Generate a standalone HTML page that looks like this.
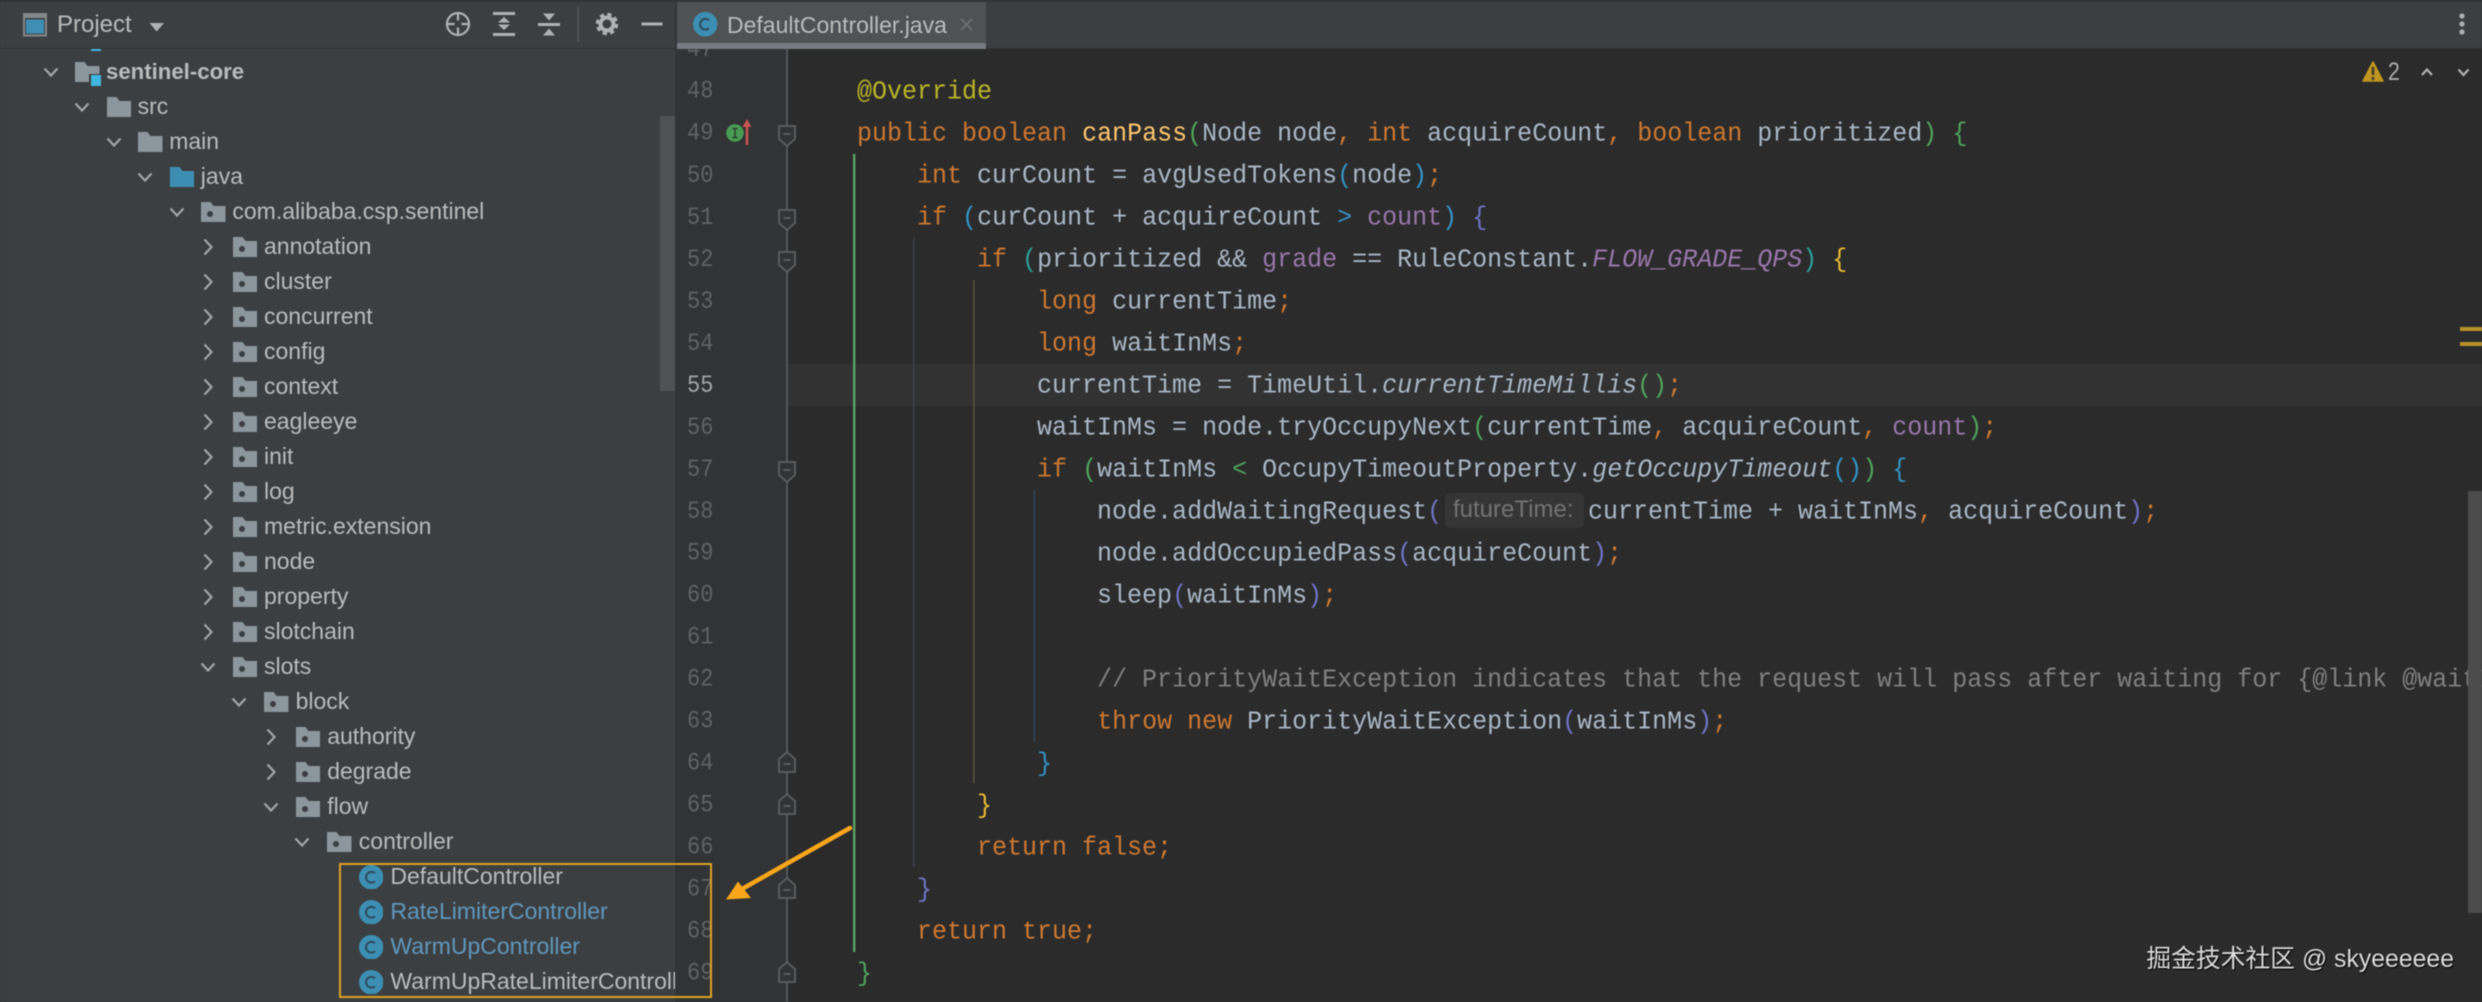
<!DOCTYPE html>
<html><head><meta charset="utf-8"><style>
html,body{margin:0;padding:0;background:#2b2b2b}
body{position:relative;width:2482px;height:1002px;overflow:hidden;background:#2b2b2b;font-family:"Liberation Sans","Noto Sans CJK SC",sans-serif;filter:blur(.4px)}
.abs,.l,.n,.row{position:absolute}
#tree{position:absolute;left:0;top:0;width:675px;height:1002px;background:#3c3f41;overflow:hidden}
.row{left:0;width:675px;height:35px;top:calc(54.2px + var(--i)*35px);color:#bbb;font-size:23px;line-height:35px}
.row svg{position:absolute}
.row .ic{left:calc(75px + var(--l)*31.5px);top:7.7px;width:24.5px;height:20px}
.row .ch{left:calc(41px + var(--l)*31.4px);top:7.5px;width:20px;height:20px;fill:none;stroke:#a3a5a7;stroke-width:2.2}
.row span{position:absolute;white-space:pre;left:calc(106px + var(--l)*31.6px);top:0}
.row .m{color:#6097bd}
#gutter{position:absolute;left:675px;top:0;width:112px;height:1002px;background:#313335}
#cur{position:absolute;left:787px;top:364px;width:1695px;height:42px;background:#323232}
#fold{position:absolute;left:786px;top:49px;width:2px;height:953px;background:#545658}
.n{left:687px;top:calc(70.7px + (var(--n) - 48)*42.03px);height:42px;line-height:42px;font:22px/42px "Liberation Mono",monospace;color:#606366;transform:scaleY(1.15)}
.l{left:797px;top:calc(70.7px + (var(--n) - 48)*42.03px);height:42px;font:25px/42px "Liberation Mono",monospace;color:#a9b7c6;white-space:pre;transform:scaleY(1.05)}
i{font-style:normal}
.k,.o{color:#cc7832}.f{color:#ffc66d}.v{color:#9876aa}.it{font-style:italic}.c{color:#808080}.a{color:#bbb529}
.g{color:#4fa35c}.b{color:#3592c4}.y{color:#e8ba36}.t{color:#2aa198}.p{color:#6f73c4}
#head{position:absolute;left:0;top:0;width:2482px;height:49px;background:#3c3f41;border-bottom:0}
</style></head><body>

<div id="tree">
<svg width="0" height="0" style="position:absolute"><defs>
<symbol id="fd" viewBox="0 0 24.5 20"><path d="M0 0H9.5L12.5 4H24.5V20H0Z" fill="#8b969d"/></symbol>
<symbol id="pk" viewBox="0 0 24.5 20"><path d="M0 0H9.5L12.5 4H24.5V20H0Z" fill="#8b969d"/><circle cx="9" cy="12" r="3" fill="#3c3f41"/></symbol>
<symbol id="jv" viewBox="0 0 24.5 20"><path d="M0 0H9.5L12.5 4H24.5V20H0Z" fill="#3c8fb3"/></symbol>
<symbol id="cl" viewBox="0 0 24.5 24.5"><circle cx="12.25" cy="12.25" r="12.25" fill="#3c8fb3"/><path d="M16 8.2A5.4 5.4 0 1 0 16 16.3" fill="none" stroke="#2f4a5a" stroke-width="2"/></symbol>
<symbol id="d" viewBox="0 0 20 20"><path d="M3.5 6.5L10 13.5L16.5 6.5"/></symbol>
<symbol id="r" viewBox="0 0 20 20"><path d="M6.5 2.5L13.5 10L6.5 17.5"/></symbol>
</defs></svg>
<div class="abs" style="left:91px;top:49px;width:10px;height:2px;background:#40b6e0"></div>

<div class="row" style="--i:0;--l:0"><svg class="ch"><use href="#d"/></svg><svg class="ic"><use href="#fd"/></svg><div class="abs" style="left:89px;top:20px;width:13px;height:13px;background:#3c3f41"></div><div class="abs" style="left:91px;top:21px;width:10px;height:11px;background:#40b6e0"></div><span style="font-weight:bold;font-size:22.2px">sentinel-core</span></div>
<div class="row" style="--i:1;--l:1"><svg class="ch"><use href="#d"/></svg><svg class="ic"><use href="#fd"/></svg><span>src</span></div>
<div class="row" style="--i:2;--l:2"><svg class="ch"><use href="#d"/></svg><svg class="ic"><use href="#fd"/></svg><span>main</span></div>
<div class="row" style="--i:3;--l:3"><svg class="ch"><use href="#d"/></svg><svg class="ic"><use href="#jv"/></svg><span>java</span></div>
<div class="row" style="--i:4;--l:4"><svg class="ch"><use href="#d"/></svg><svg class="ic"><use href="#pk"/></svg><span>com.alibaba.csp.sentinel</span></div>
<div class="row" style="--i:5;--l:5"><svg class="ch"><use href="#r"/></svg><svg class="ic"><use href="#pk"/></svg><span>annotation</span></div>
<div class="row" style="--i:6;--l:5"><svg class="ch"><use href="#r"/></svg><svg class="ic"><use href="#pk"/></svg><span>cluster</span></div>
<div class="row" style="--i:7;--l:5"><svg class="ch"><use href="#r"/></svg><svg class="ic"><use href="#pk"/></svg><span>concurrent</span></div>
<div class="row" style="--i:8;--l:5"><svg class="ch"><use href="#r"/></svg><svg class="ic"><use href="#pk"/></svg><span>config</span></div>
<div class="row" style="--i:9;--l:5"><svg class="ch"><use href="#r"/></svg><svg class="ic"><use href="#pk"/></svg><span>context</span></div>
<div class="row" style="--i:10;--l:5"><svg class="ch"><use href="#r"/></svg><svg class="ic"><use href="#pk"/></svg><span>eagleeye</span></div>
<div class="row" style="--i:11;--l:5"><svg class="ch"><use href="#r"/></svg><svg class="ic"><use href="#pk"/></svg><span>init</span></div>
<div class="row" style="--i:12;--l:5"><svg class="ch"><use href="#r"/></svg><svg class="ic"><use href="#pk"/></svg><span>log</span></div>
<div class="row" style="--i:13;--l:5"><svg class="ch"><use href="#r"/></svg><svg class="ic"><use href="#pk"/></svg><span>metric.extension</span></div>
<div class="row" style="--i:14;--l:5"><svg class="ch"><use href="#r"/></svg><svg class="ic"><use href="#pk"/></svg><span>node</span></div>
<div class="row" style="--i:15;--l:5"><svg class="ch"><use href="#r"/></svg><svg class="ic"><use href="#pk"/></svg><span>property</span></div>
<div class="row" style="--i:16;--l:5"><svg class="ch"><use href="#r"/></svg><svg class="ic"><use href="#pk"/></svg><span>slotchain</span></div>
<div class="row" style="--i:17;--l:5"><svg class="ch"><use href="#d"/></svg><svg class="ic"><use href="#pk"/></svg><span>slots</span></div>
<div class="row" style="--i:18;--l:6"><svg class="ch"><use href="#d"/></svg><svg class="ic"><use href="#pk"/></svg><span>block</span></div>
<div class="row" style="--i:19;--l:7"><svg class="ch"><use href="#r"/></svg><svg class="ic"><use href="#pk"/></svg><span>authority</span></div>
<div class="row" style="--i:20;--l:7"><svg class="ch"><use href="#r"/></svg><svg class="ic"><use href="#pk"/></svg><span>degrade</span></div>
<div class="row" style="--i:21;--l:7"><svg class="ch"><use href="#d"/></svg><svg class="ic"><use href="#pk"/></svg><span>flow</span></div>
<div class="row" style="--i:22;--l:8"><svg class="ch"><use href="#d"/></svg><svg class="ic"><use href="#pk"/></svg><span>controller</span></div>
<div class="row" style="--i:23;--l:9"><svg class="ic" style="top:5.5px;height:24.5px"><use href="#cl"/></svg><span>DefaultController</span></div>
<div class="row" style="--i:24;--l:9"><svg class="ic" style="top:5.5px;height:24.5px"><use href="#cl"/></svg><span class="m">RateLimiterController</span></div>
<div class="row" style="--i:25;--l:9"><svg class="ic" style="top:5.5px;height:24.5px"><use href="#cl"/></svg><span class="m">WarmUpController</span></div>
<div class="row" style="--i:26;--l:9"><svg class="ic" style="top:5.5px;height:24.5px"><use href="#cl"/></svg><span>WarmUpRateLimiterController</span></div>
<div class="abs" style="left:660px;top:116px;width:15px;height:275px;background:#4f5254"></div>
</div>

<div id="gutter"></div>
<div id="cur"></div>
<div id="fold"></div>

<div class="n" style="--n:47">47</div>
<div class="n" style="--n:48">48</div>
<div class="n" style="--n:49">49</div>
<div class="n" style="--n:50">50</div>
<div class="n" style="--n:51">51</div>
<div class="n" style="--n:52">52</div>
<div class="n" style="--n:53">53</div>
<div class="n" style="--n:54">54</div>
<div class="n" style="--n:55;color:#a4a3a3">55</div>
<div class="n" style="--n:56">56</div>
<div class="n" style="--n:57">57</div>
<div class="n" style="--n:58">58</div>
<div class="n" style="--n:59">59</div>
<div class="n" style="--n:60">60</div>
<div class="n" style="--n:61">61</div>
<div class="n" style="--n:62">62</div>
<div class="n" style="--n:63">63</div>
<div class="n" style="--n:64">64</div>
<div class="n" style="--n:65">65</div>
<div class="n" style="--n:66">66</div>
<div class="n" style="--n:67">67</div>
<div class="n" style="--n:68">68</div>
<div class="n" style="--n:69">69</div>

<svg class="abs" style="left:0;top:0" width="2482" height="1002">
<defs>
<symbol id="fdn" viewBox="0 0 18 22"><path d="M1 1H17V14L9 21L1 14Z" fill="#313335" stroke="#5d6062" stroke-width="1.8"/><path d="M5.5 9H12.5" stroke="#5d6062" stroke-width="1.8"/></symbol>
<symbol id="fup" viewBox="0 0 18 22"><path d="M1 21H17V8L9 1L1 8Z" fill="#313335" stroke="#5d6062" stroke-width="1.8"/><path d="M5.5 13H12.5" stroke="#5d6062" stroke-width="1.8"/></symbol>
</defs>
<use href="#fdn" x="778" y="125" width="18" height="22"/>
<use href="#fdn" x="778" y="209" width="18" height="22"/>
<use href="#fdn" x="778" y="251" width="18" height="22"/>
<use href="#fdn" x="778" y="461" width="18" height="22"/>
<use href="#fup" x="778" y="751" width="18" height="22"/>
<use href="#fup" x="778" y="793" width="18" height="22"/>
<use href="#fup" x="778" y="877" width="18" height="22"/>
<use href="#fup" x="778" y="961" width="18" height="22"/>
<circle cx="735" cy="133" r="8.8" fill="#499c54"/><path d="M732.5 128.5H737.5M735 128.5V137.5M732.5 137.5H737.5" stroke="#2b3a2b" stroke-width="1.4" fill="none"/>
<path d="M747 145V124" stroke="#c75450" stroke-width="2.6"/><path d="M747 119L742.5 127H751.5Z" fill="#c75450"/>
<rect x="853" y="154" width="2.4" height="798" fill="#5aa265"/>
<rect x="913" y="238" width="1.6" height="629" fill="#3d3f4e"/>
<rect x="973" y="280" width="1.6" height="503" fill="#54503a"/>
<rect x="1033.5" y="490" width="1.6" height="252" fill="#2f4358"/>
<rect x="1445" y="493" width="139" height="35" rx="5" fill="#353535"/>
</svg>

<div class="l" style="--n:48"><i class="a">    @Override</i></div>
<div class="l" style="--n:49">    <i class="k">public boolean </i><i class="f">canPass</i><i class="g">(</i>Node node<i class="o">, </i><i class="k">int </i>acquireCount<i class="o">, </i><i class="k">boolean </i>prioritized<i class="g">)</i> <i class="g">{</i></div>
<div class="l" style="--n:50">        <i class="k">int </i>curCount = avgUsedTokens<i class="b">(</i>node<i class="b">)</i><i class="o">;</i></div>
<div class="l" style="--n:51">        <i class="k">if </i><i class="b">(</i>curCount + acquireCount <i class="b">&gt;</i> <i class="v">count</i><i class="b">)</i> <i class="p">{</i></div>
<div class="l" style="--n:52">            <i class="k">if </i><i class="t">(</i>prioritized &amp;&amp; <i class="v">grade</i> == RuleConstant.<i class="v it">FLOW_GRADE_QPS</i><i class="t">)</i> <i class="y">{</i></div>
<div class="l" style="--n:53">                <i class="k">long </i>currentTime<i class="o">;</i></div>
<div class="l" style="--n:54">                <i class="k">long </i>waitInMs<i class="o">;</i></div>
<div class="l" style="--n:55">                currentTime = TimeUtil.<i class="it">currentTimeMillis</i><i class="g">()</i><i class="o">;</i></div>
<div class="l" style="--n:56">                waitInMs = node.tryOccupyNext<i class="g">(</i>currentTime<i class="o">, </i>acquireCount<i class="o">, </i><i class="v">count</i><i class="g">)</i><i class="o">;</i></div>
<div class="l" style="--n:57">                <i class="k">if </i><i class="g">(</i>waitInMs <i class="g">&lt;</i> OccupyTimeoutProperty.<i class="it">getOccupyTimeout</i><i class="b">()</i><i class="g">)</i> <i class="b">{</i></div>
<div class="l" style="--n:58">                    node.addWaitingRequest<i class="p">(</i></div>
<div class="abs" style="left:1453px;top:491px;font-size:24px;line-height:38px;color:#737373;white-space:pre">futureTime:</div>
<div class="l" style="--n:58;left:1588px">currentTime + waitInMs<i class="o">, </i>acquireCount<i class="p">)</i><i class="o">;</i></div>
<div class="l" style="--n:59">                    node.addOccupiedPass<i class="p">(</i>acquireCount<i class="p">)</i><i class="o">;</i></div>
<div class="l" style="--n:60">                    sleep<i class="p">(</i>waitInMs<i class="p">)</i><i class="o">;</i></div>
<div class="l c" style="--n:62;color:#808080">                    // PriorityWaitException indicates that the request will pass after waiting for {@link @waitInMs}</div>
<div class="l" style="--n:63">                    <i class="k">throw new </i>PriorityWaitException<i class="p">(</i>waitInMs<i class="p">)</i><i class="o">;</i></div>
<div class="l" style="--n:64">                <i class="b">}</i></div>
<div class="l" style="--n:65">            <i class="y">}</i></div>
<div class="l" style="--n:66">            <i class="k">return false;</i></div>
<div class="l" style="--n:67">        <i class="p">}</i></div>
<div class="l" style="--n:68">        <i class="k">return true;</i></div>
<div class="l" style="--n:69">    <i class="g">}</i></div>

<div class="abs" style="left:2468px;top:491px;width:14px;height:422px;background:#4c4c4c"></div>
<div class="abs" style="left:2460px;top:327px;width:22px;height:4px;background:#b8912a"></div>
<div class="abs" style="left:2460px;top:342px;width:22px;height:4px;background:#b8912a"></div>

<svg class="abs" style="left:2355px;top:55px" width="127" height="35">
<path d="M18 7L28 26H8Z" fill="#bf971f" stroke="#bf971f" stroke-width="1.5" stroke-linejoin="round"/>
<path d="M18 12V20M18 22V25" stroke="#3a3a2a" stroke-width="2.6"/>
<path d="M67 20L72 14.5L77 20" fill="none" stroke="#afb1b3" stroke-width="2.2"/>
<path d="M103.5 14.5L108.5 20L113.5 14.5" fill="none" stroke="#afb1b3" stroke-width="2.2"/>
</svg>
<div class="abs" style="left:2388px;top:52px;font:25px/40px 'Liberation Sans',sans-serif;color:#a9abad;transform:scaleX(.85);transform-origin:left">2</div>

<div id="head">
<div class="abs" style="left:0;top:0;width:2482px;height:2px;background:#323436"></div>
<div class="abs" style="left:0;top:48px;width:2482px;height:1px;background:#323232"></div>
<svg class="abs" style="left:0;top:0" width="680" height="48" fill="none">
<rect x="24" y="14" width="22" height="21.5" fill="#3b3e40" stroke="#84888b" stroke-width="2"/><rect x="24" y="14" width="22" height="4" fill="#84888b"/><rect x="26" y="19.5" width="18" height="14" fill="#3f8fb5"/>
<path d="M149.5 23H164L156.7 31.5Z" fill="#afb1b3"/>
<circle cx="458" cy="24" r="11" stroke="#afb1b3" stroke-width="2.2"/><path d="M458 13V20.5M458 27.5V35M447 24H454.5M461.5 24H469" stroke="#afb1b3" stroke-width="2.2"/>
<path d="M493 13.5H515M493 34.5H515" stroke="#afb1b3" stroke-width="3"/><path d="M504 17L510 22.5H498ZM504 30L498 24.5H510Z" fill="#afb1b3"/>
<path d="M538 24.5H560" stroke="#afb1b3" stroke-width="3"/><path d="M543 13.5H555L549 20.5ZM549 28.5L555 35.5H543Z" fill="#afb1b3"/>
<rect x="577.5" y="7" width="1.5" height="35" fill="#55585a"/>
<circle cx="607" cy="24" r="6.5" stroke="#afb1b3" stroke-width="4"/><circle cx="607" cy="24" r="9.5" stroke="#afb1b3" stroke-width="3.4" stroke-dasharray="4.2 3.26"/>
<path d="M641.5 24H662.5" stroke="#afb1b3" stroke-width="3"/>
</svg>
<div class="abs" style="left:57px;top:5px;font-size:24px;line-height:40px;color:#bbb">Project</div>
<div class="abs" style="left:675px;top:0;width:2px;height:48px;background:#333537"></div>
<div class="abs" style="left:677px;top:2px;width:309px;height:41px;background:#4e5254"></div>
<div class="abs" style="left:677px;top:43px;width:309px;height:6px;background:#747a80"></div>
<svg class="abs" style="left:693px;top:12px" width="24.5" height="24.5"><use href="#cl"/></svg>
<div class="abs" style="left:727px;top:5px;font-size:23px;line-height:40px;color:#bbb;white-space:pre">DefaultController.java</div>
<svg class="abs" style="left:960px;top:18px" width="13" height="13" fill="none"><path d="M1 1L12 12M12 1L1 12" stroke="#6e7274" stroke-width="1.6"/></svg>
<svg class="abs" style="left:2456px;top:12px" width="12" height="25" fill="#afb1b3"><circle cx="6" cy="4" r="2.6"/><circle cx="6" cy="12" r="2.6"/><circle cx="6" cy="20" r="2.6"/></svg>
</div>

<div class="abs" style="left:339px;top:863px;width:369px;height:131px;border:2.5px solid #dba124;box-sizing:content-box"></div>
<svg class="abs" style="left:0;top:0" width="2482" height="1002">
<path d="M850 828L742 889" stroke="#f9a61a" stroke-width="4.5" stroke-linecap="round"/>
<path d="M726 899.5L738 881.5L751 898Z" fill="#f9a61a"/>
</svg>

<div class="abs" style="right:28px;top:938px;font-size:24.8px;line-height:44px;color:#dcdcdc;white-space:pre;text-shadow:1px 1px 1px #000">掘金技术社区 @ skyeeeeee</div>
</body></html>
